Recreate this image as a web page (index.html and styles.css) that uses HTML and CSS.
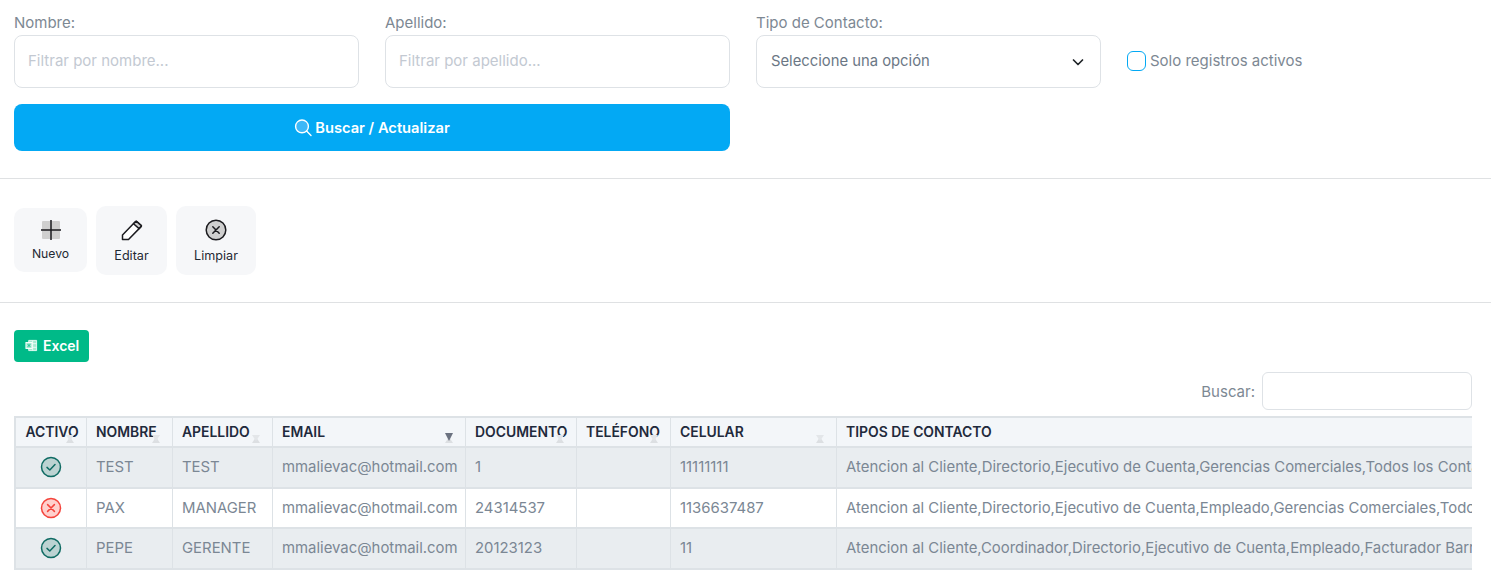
FILE: index.html
```html
<!DOCTYPE html>
<html lang="es">
<head>
<meta charset="utf-8">
<title>Contactos</title>
<link rel="stylesheet" href="styles.css">
</head>
<body>
<main class="page">
  <section class="filters">
    <div class="field">
      <label class="field-label" for="f-nombre">Nombre:</label>
      <input class="control" id="f-nombre" type="text" placeholder="Filtrar por nombre...">
    </div>
    <div class="field">
      <label class="field-label" for="f-apellido">Apellido:</label>
      <input class="control" id="f-apellido" type="text" placeholder="Filtrar por apellido...">
    </div>
    <div class="field">
      <span class="field-label">Tipo de Contacto:</span>
      <div class="control select">
        <span>Seleccione una opción</span>
        <svg class="chevron" viewBox="0 0 16 16" width="16" height="16"><path d="M3.5 6l4.5 4.5L12.5 6" fill="none" stroke="#212529" stroke-width="1.7" stroke-linecap="round" stroke-linejoin="round"/></svg>
      </div>
    </div>
    <div class="check-field">
      <span class="checkbox"></span>
      <span>Solo registros activos</span>
    </div>
    <button class="search-btn" type="button">
      <svg viewBox="0 0 18 18" width="18" height="18"><circle cx="8" cy="7.4" r="6.4" fill="#3db8f8" stroke="#fff" stroke-width="1.4"/><path d="M12.6 12l4.4 4.4" stroke="#fff" stroke-width="1.4" stroke-linecap="round"/></svg>
      <span>Buscar / Actualizar</span>
    </button>
  </section>

  <hr class="rule rule-one">

  <section class="toolbar">
    <button class="tool tool-new" type="button">
      <svg viewBox="0 0 20 20" width="20" height="20"><rect x="1" y="1" width="18" height="18" rx="1" fill="#cfcfcf"/><path d="M10 0v20M0 10h20" stroke="#1b1b1f" stroke-width="1.5"/></svg>
      <span>Nuevo</span>
    </button>
    <button class="tool tool-edit" type="button">
      <svg viewBox="0 0 22 22" width="22" height="22"><path d="M1.5 16L14.5 2.6a1 1 0 0 1 1.4 0l4.2 3.6a1 1 0 0 1 0 1.4L7.5 20.5h-6z" fill="#fff" stroke="#1b1b1f" stroke-width="1.5" stroke-linejoin="round"/><path d="M15.2 2.2l5.2 4.5-2.3 2.9-5.6-4.8z" fill="#cfcfcf" stroke="#1b1b1f" stroke-width="1.5" stroke-linejoin="round"/></svg>
      <span>Editar</span>
    </button>
    <button class="tool tool-clear" type="button">
      <svg viewBox="0 0 22 22" width="22" height="22"><circle cx="11" cy="11" r="9.8" fill="#cfcfcf" stroke="#1b1b1f" stroke-width="1.5"/><path d="M7.8 7.8l6.4 6.4M14.2 7.8l-6.4 6.4" stroke="#1b1b1f" stroke-width="1.5" stroke-linecap="round"/></svg>
      <span>Limpiar</span>
    </button>
  </section>

  <hr class="rule rule-two">

  <button class="excel-btn" type="button">
    <svg viewBox="0 0 14 14" width="13" height="13"><path d="M4 1.5h8.5v11H4z" fill="#a8ead2" stroke="#e8fbf4" stroke-width="1"/><path d="M8.2 1.5v11M4 5h8.5M4 9h8.5" stroke="#e8fbf4" stroke-width="1"/><rect x="1" y="3.8" width="6.6" height="6.4" fill="#a8ead2" stroke="#fff" stroke-width="1"/><path d="M3 5.6l2.6 2.8M5.6 5.6l-2.6 2.8" stroke="#00ba88" stroke-width="1"/></svg>
    <span>Excel</span>
  </button>

  <div class="table-search">
    <label for="t-search">Buscar:</label>
    <input class="table-search-input" id="t-search" type="text">
  </div>

  <div class="table-wrap">
    <table class="grid">
      <colgroup>
        <col class="c-activo"><col class="c-nombre"><col class="c-apellido"><col class="c-email"><col class="c-doc"><col class="c-tel"><col class="c-cel"><col class="c-tipos">
      </colgroup>
      <thead>
        <tr>
          <th class="sortable">ACTIVO</th>
          <th class="sortable">NOMBRE</th>
          <th class="sortable">APELLIDO</th>
          <th class="sortable sorted">EMAIL</th>
          <th class="sortable">DOCUMENTO</th>
          <th class="sortable">TELÉFONO</th>
          <th class="sortable">CELULAR</th>
          <th>TIPOS DE CONTACTO</th>
        </tr>
      </thead>
      <tbody>
        <tr class="odd">
          <td class="status"><svg viewBox="0 0 22 22" width="22" height="22"><circle cx="11" cy="11" r="9.5" fill="#bcd3d2" stroke="#0f6b63" stroke-width="1.5"/><path d="M7 11.4l2.8 2.6L15 8.6" fill="none" stroke="#0f6b63" stroke-width="1.5" stroke-linecap="round" stroke-linejoin="round"/></svg></td>
          <td>TEST</td><td>TEST</td><td>mmalievac@hotmail.com</td><td>1</td><td></td><td>11111111</td>
          <td>Atencion al Cliente,Directorio,Ejecutivo de Cuenta,Gerencias Comerciales,Todos los Contactos</td>
        </tr>
        <tr>
          <td class="status"><svg viewBox="0 0 22 22" width="22" height="22"><circle cx="11" cy="11" r="9.5" fill="#ffd0cd" stroke="#f4443c" stroke-width="1.5"/><path d="M7.6 7.6l6.8 6.8M14.4 7.6l-6.8 6.8" stroke="#f4443c" stroke-width="1.5" stroke-linecap="round"/></svg></td>
          <td>PAX</td><td>MANAGER</td><td>mmalievac@hotmail.com</td><td>24314537</td><td></td><td>1136637487</td>
          <td>Atencion al Cliente,Directorio,Ejecutivo de Cuenta,Empleado,Gerencias Comerciales,Todos los Contactos</td>
        </tr>
        <tr class="odd">
          <td class="status"><svg viewBox="0 0 22 22" width="22" height="22"><circle cx="11" cy="11" r="9.5" fill="#bcd3d2" stroke="#0f6b63" stroke-width="1.5"/><path d="M7 11.4l2.8 2.6L15 8.6" fill="none" stroke="#0f6b63" stroke-width="1.5" stroke-linecap="round" stroke-linejoin="round"/></svg></td>
          <td>PEPE</td><td>GERENTE</td><td>mmalievac@hotmail.com</td><td>20123123</td><td></td><td>11</td>
          <td>Atencion al Cliente,Coordinador,Directorio,Ejecutivo de Cuenta,Empleado,Facturador Barrios,Gerencias Comerciales</td>
        </tr>
      </tbody>
    </table>
  </div>
</main>
</body>
</html>
```
FILE: styles.css
```css
* { box-sizing: border-box; }
html, body { margin: 0; height: 570px; overflow: hidden; background: #fff; }
body { font-family: Inter, "Liberation Sans", sans-serif; font-size: 14px; color: #7b8794; }
button { font-family: inherit; cursor: pointer; }

.page { padding: 12px 19px 0 14px; }

.filters {
  display: grid;
  grid-template-columns: 345px 345px 345px 1fr;
  column-gap: 26px;
  row-gap: 16px;
}
.field { display: flex; flex-direction: column; }
.field-label { font-size: 15px; line-height: 21px; height: 23px; color: #7d8893; }
.control {
  width: 100%;
  height: 53px;
  border: 1px solid #dee2e6;
  border-radius: 8px;
  padding: 0 13px 2px;
  background: #fff;
  font: inherit;
  font-size: 15px;
  color: #6b7785;
  outline: none;
}
.control::placeholder { color: #c3c9d2; opacity: 1; }
.select { display: flex; align-items: center; justify-content: space-between; padding-left: 14px; padding-right: 14px; font-size: 14.8px; }
.chevron { margin-top: 2px; }
.check-field { display: flex; align-items: center; gap: 4px; padding-top: 21px; font-size: 15px; color: #7d8893; white-space: nowrap; }
.checkbox { width: 19px; height: 20px; margin-top: 1px; border: 1px solid #03a9f4; border-radius: 6px; background: #fff; }
.search-btn {
  grid-column: 1 / span 2;
  height: 47px;
  border: 0;
  border-radius: 8px;
  background: #03a9f4;
  color: #fff;
  font-size: 14.7px;
  font-weight: 600;
  display: flex;
  align-items: center;
  justify-content: center;
  gap: 3px;
}

.rule { border: 0; border-top: 1px solid #dfe1e3; margin: 0 -19px 0 -14px; }
.rule-one { margin-top: 27px; }
.rule-two { margin-top: 27px; }

.toolbar { display: flex; align-items: center; gap: 9px; margin-top: 27px; }
.tool {
  display: flex;
  flex-direction: column;
  align-items: center;
  justify-content: center;
  gap: 7px;
  height: 69px;
  padding: 0;
  border: 0;
  border-radius: 10px;
  background: #f6f7f9;
  color: #1f2933;
  font-size: 12.6px;
  font-weight: 400;
}
.tool-new { height: 64px; gap: 6px; width: 73px; margin-bottom: 1px; font-size: 12.2px; }
.tool-edit { width: 71px; }
.tool-clear { width: 80px; }

.excel-btn {
  display: flex;
  align-items: center;
  gap: 5px;
  height: 32px;
  width: 75px;
  margin-top: 27px;
  padding: 0 0 2px 11px;
  border: 0;
  border-radius: 4px;
  background: #00ba88;
  color: #fff;
  font-size: 14px;
  font-weight: 600;
}

.table-search { display: flex; justify-content: flex-end; align-items: center; gap: 7px; margin-top: 10px; font-size: 15px; color: #7d8893; }
.table-search-input { width: 210px; height: 38px; border: 1px solid #dee2e6; border-radius: 6px; background: #fff; outline: none; }

.table-wrap { margin-top: 6px; width: 1458px; overflow: hidden; }
.grid { border-collapse: collapse; table-layout: fixed; width: 1800px; border: 2px solid #dde2e6; }
.c-activo { width: 71px; }
.c-nombre { width: 86px; }
.c-apellido { width: 100px; }
.c-email { width: 193px; }
.c-doc { width: 111px; }
.c-tel { width: 94px; }
.c-cel { width: 166px; }
.c-tipos { width: 979px; }
.grid th, .grid td {
  border-left: 1px solid #dde2e6;
  border-right: 1px solid #dde2e6;
  padding: 0 9px 0 9.5px;
  white-space: nowrap;
  overflow: hidden;
  text-align: left;
}
.grid th {
  position: relative;
  height: 30px;
  background: #f3f6f9;
  color: #1f2a3c;
  font-size: 13.9px;
  font-weight: 600;
  border-bottom: 2px solid #dde2e6;
}
.grid th.sortable::before,
.grid th.sortable::after {
  content: "";
  position: absolute;
  right: 12px;
  width: 0;
  height: 0;
  border-left: 4px solid transparent;
  border-right: 4px solid transparent;
}
.grid th.sortable::before { bottom: 3px; border-bottom: 6px solid #dcdfe2; }
.grid th.sortable::after { bottom: 5px; border-top: 6px solid #e3e6e9; }
.grid th.sorted::after { border-top: 8px solid #6b7280; bottom: 5px; }
.grid td { height: 40.6px; font-size: 14.9px; color: #7b8794; border-bottom: 2px solid #dde2e6; }
.grid tr.odd td { background: #e9edf0; }
.grid td.status { text-align: center; padding: 0; }
.grid td.status svg { display: block; margin: 0 auto; }
```
